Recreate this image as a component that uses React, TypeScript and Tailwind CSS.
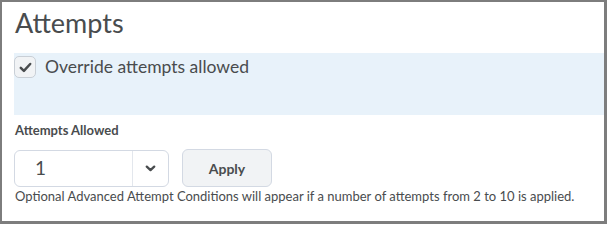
import React from 'react';

const CheckIcon = () => (
  <svg width="13" height="11" viewBox="0 0 13 11" fill="none">
    <path d="M1.8 5.8 4.9 8.8 11.2 2" stroke="#494c4e" strokeWidth="2.5" strokeLinecap="round" strokeLinejoin="round" />
  </svg>
);

const ChevronDown = () => (
  <svg width="11" height="7" viewBox="0 0 11 7" fill="none">
    <path d="M1.8 1.6 5.5 5.1 9.2 1.6" stroke="#494c4e" strokeWidth="2.3" strokeLinecap="round" strokeLinejoin="round" />
  </svg>
);

export default function App() {
  return (
    <div
      className="w-[607px] h-[224px] bg-white border-t-2 border-l-2 border-r-[3px] border-b-[3px] border-[#7d7d7d] overflow-hidden text-[#494c4e]"
      style={{ fontFamily: 'Lato, "Noto Sans", sans-serif' }}
    >
      <div className="pl-[12px]">
        <h1 className="text-[27px] leading-[32px] pt-[5px] pl-[1px] font-normal">Attempts</h1>

        <div className="mt-[14px] h-[62px] bg-[#e8f2fa] pt-[3px]">
          <label className="flex items-start gap-[9px]">
            <span className="w-[22px] h-[22px] rounded-[5px] border border-[#c9cfd6] bg-[#f1f3f5] flex items-center justify-center">
              <CheckIcon />
            </span>
            <span className="text-[17.5px] leading-[22px] mt-[0px]">Override attempts allowed</span>
          </label>
        </div>

        <div className="mt-[7px] pl-[1px] text-[13px] leading-[16px] font-bold">Attempts Allowed</div>

        <div className="mt-[11px] flex items-center gap-[13px]">
          <div className="w-[155px] h-[37px] rounded-[6px] border border-[#d3d9e3] bg-white flex">
            <div className="flex-1 flex items-center pl-[20px] text-[19px]">1</div>
            <div className="w-[36px] border-l border-[#e3e7ed] flex items-center justify-center">
              <ChevronDown />
            </div>
          </div>
          <button className="w-[90px] h-[38px] rounded-[6px] border border-[#d3d9e3] bg-[#f1f3f5] text-[14px] font-bold">
            Apply
          </button>
        </div>

        <p className="mt-[1px] pl-[1px] text-[13px] leading-[16px]">
          Optional Advanced Attempt Conditions will appear if a number of attempts from 2 to 10 is applied.
        </p>
      </div>
    </div>
  );
}
